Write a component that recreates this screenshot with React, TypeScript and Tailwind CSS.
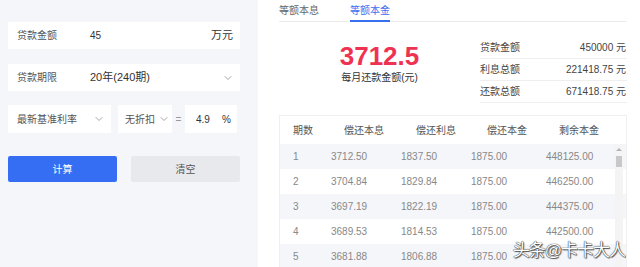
import { ChevronDown } from 'lucide-react'

// last value of row 5 sits under the watermark in the screenshot
const rows = [
  ['1', '3712.50', '1837.50', '1875.00', '448125.00'],
  ['2', '3704.84', '1829.84', '1875.00', '446250.00'],
  ['3', '3697.19', '1822.19', '1875.00', '444375.00'],
  ['4', '3689.53', '1814.53', '1875.00', '442500.00'],
  ['5', '3681.88', '1806.88', '1875.00', ''],
]

const summary = [
  ['贷款金额', '450000 元'],
  ['利息总额', '221418.75 元'],
  ['还款总额', '671418.75 元'],
]

function LeftForm() {
  return (
    <div className="w-[258px] shrink-0 bg-[#f5f6fa] pl-[8px] pr-[18px] pt-[22px] text-[10px] text-[#333]">
      <div className="flex h-[27px] items-center bg-white pl-[9px] pr-[7px]">
        <span className="w-[73px] text-[#555]">贷款金额</span>
        <span className="flex-1">45</span>
        <span className="text-[11px]">万元</span>
      </div>

      <div className="mt-[15px] flex h-[27px] items-center bg-white pl-[9px] pr-[6px]">
        <span className="w-[73px] text-[#555]">贷款期限</span>
        <span className="flex-1 text-[11px]">20年(240期)</span>
        <ChevronDown className="h-3 w-3 text-[#888]" strokeWidth={1.5} />
      </div>

      <div className="mt-[14px] flex h-[28px] items-stretch">
        <div className="flex w-[103px] items-center justify-between bg-white pl-[9px] pr-[6px]">
          <span className="text-[#555]">最新基准利率</span>
          <ChevronDown className="h-3 w-3 text-[#888]" strokeWidth={1.5} />
        </div>
        <div className="ml-[7px] flex w-[54px] items-center gap-[3px] bg-white pl-[7px]">
          <span className="text-[#555]">无折扣</span>
          <ChevronDown className="h-3 w-3 text-[#888]" strokeWidth={1.5} />
        </div>
        <span className="flex w-[13px] items-center justify-center text-[#999]">=</span>
        <div className="flex w-[52px] items-center justify-between bg-white pl-[11px] pr-[6px]">
          <span>4.9</span>
          <span>%</span>
        </div>
      </div>

      <div className="mt-[23px] flex h-[26px] justify-between">
        <button className="w-[109px] rounded-[2px] bg-[#356ef3] text-white">计算</button>
        <button className="w-[109px] rounded-[2px] bg-[#e8e9ed] text-[#555]">清空</button>
      </div>
    </div>
  )
}

function Tabs() {
  return (
    <div className="flex h-[22px] border-b border-[#ececec] text-[10px]">
      <div className="w-[71px] pt-[3px] text-[#666]">等额本息</div>
      <div className="-mb-px border-b-2 border-[#3a6ff0] pt-[3px] text-[#3a6ff0]">等额本金</div>
    </div>
  )
}

function Summary() {
  return (
    <div className="flex h-[93px]">
      <div className="flex w-[201px] flex-col items-center pt-[19px]">
        <div className="text-[26px] leading-[30px] font-bold text-[#ee3352]">3712.5</div>
        <div className="-mt-[1px] text-[10px] text-[#333]">每月还款金额(元)</div>
      </div>
      <div className="flex-1 pt-[15px] text-[10px] text-[#444]">
        {summary.map(([label, value]) => (
          <div key={label} className="flex h-[22px] items-center justify-between border-b border-[#efefef] pr-px">
            <span>{label}</span>
            <span>{value}</span>
          </div>
        ))}
      </div>
    </div>
  )
}

function Schedule() {
  return (
    <div className="relative flex-1 overflow-hidden border border-b-0 border-[#efefef] text-[10px]">
      <div className="flex h-[28px] items-center text-[#555]">
        <span className="w-[51px] pl-[13px]">期数</span>
        <span className="w-[70px] pl-[13px]">偿还本息</span>
        <span className="w-[70px] pl-[15px]">偿还利息</span>
        <span className="w-[75px] pl-[16px]">偿还本金</span>
        <span className="pl-[13px]">剩余本金</span>
      </div>
      {rows.map((r, i) => (
        <div
          key={r[0]}
          className={`flex h-[25px] items-center text-[#888] ${i % 2 === 0 ? 'bg-[#f5f6fa]' : 'bg-white'}`}
        >
          <span className="w-[51px] pl-[13px]">{r[0]}</span>
          <span className="w-[70px]">{r[1]}</span>
          <span className="w-[70px]">{r[2]}</span>
          <span className="w-[75px]">{r[3]}</span>
          {r[4] && <span>{r[4]}</span>}
        </div>
      ))}

      {/* scrollbar */}
      <div className="absolute top-[28px] right-[3px] bottom-0 w-[8px] bg-[#f4f4f4]">
        <div className="mx-auto mt-[4px] h-0 w-0 border-x-[3px] border-b-[3px] border-x-transparent border-b-[#b5b5b5]" />
        <div className="mx-auto mt-[5px] h-[11px] w-[6px] bg-[#c8c8c8]" />
      </div>

      <div className="absolute right-[1px] bottom-[8px] text-[17px] leading-none tracking-[-1px] text-white [text-shadow:0_0_1px_#333,0_0_1px_#333,1px_1px_1px_#555]">
        头条@卡卡大人
      </div>
    </div>
  )
}

export default function App() {
  return (
    <div
      className="flex h-[267px] w-[640px] overflow-hidden bg-white"
      style={{ fontFamily: '"Liberation Sans", "Noto Sans CJK SC", sans-serif' }}
    >
      <LeftForm />
      <div className="flex flex-1 flex-col pr-[13px] pl-[21px]">
        <Tabs />
        <Summary />
        <Schedule />
      </div>
    </div>
  )
}
